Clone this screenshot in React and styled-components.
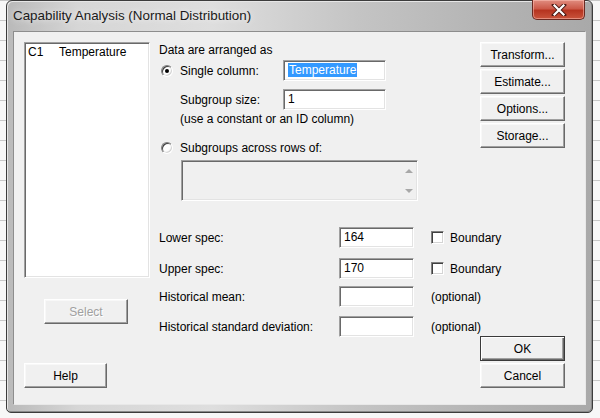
import React from "react";
import styled, { createGlobalStyle, css } from "styled-components";

const GlobalStyle = createGlobalStyle`
  html, body { margin: 0; padding: 0; }
  body {
    width: 600px;
    height: 418px;
    overflow: hidden;
    background-color: #f7f7f7;
    background-image: linear-gradient(#c8c8c8 1px, transparent 1px);
    background-size: 100% 20px;
    font-family: "Liberation Sans", Arial, sans-serif;
    font-size: 12px;
    color: #000;
  }
  * { box-sizing: border-box; }
`;

// classic 3d borders
const sunken = css`
  border: 1px solid;
  border-color: #a0a0a0 #ffffff #ffffff #a0a0a0;
  box-shadow: inset 1px 1px 0 #696969, inset -1px -1px 0 #e3e3e3;
`;

const raised = css`
  border: 1px solid;
  border-color: #ffffff #696969 #696969 #ffffff;
  box-shadow: inset -1px -1px 0 #a0a0a0, inset 1px 1px 0 #f8f8f8;
`;

const Desktop = styled.div`
  padding-left: 6px;
  height: 418px;
`;

const Window = styled.div`
  width: 587px;
  height: 413px;
  display: flex;
  flex-direction: column;
  padding: 0 6px 7px 6px;
  border: 1px solid #3c3c3c;
  border-radius: 6px 6px 5px 5px;
  background: linear-gradient(
    to right,
    #b9b9b9 0%,
    #d6d6d6 12%,
    #dedede 35%,
    #c4c4c4 60%,
    #b2b2b2 85%,
    #a9a9a9 100%
  );
  box-shadow: inset 1px 1px 0 #e6e6e6, inset -1px -1px 0 #8a8a8a;
`;

const TitleBar = styled.div`
  height: 30px;
  display: flex;
  align-items: flex-start;
  justify-content: space-between;
`;

const Title = styled.div`
  margin-top: 7px;
  font-size: 13.4px;
  color: #1a1a1a;
  text-shadow: 0 0 6px rgba(255, 255, 255, 0.9);
`;

const CloseButton = styled.div`
  width: 53px;
  height: 20px;
  margin-top: -1px;
  margin-right: 1px;
  display: flex;
  align-items: center;
  justify-content: center;
  border: 1px solid #6b2a22;
  border-top: none;
  border-radius: 0 0 5px 5px;
  background: linear-gradient(#e08d80 0%, #cc5a49 45%, #b63420 55%, #c9543c 100%);
  box-shadow: inset 0 0 0 1px rgba(255, 200, 190, 0.5);
`;

const Client = styled.div`
  flex: 1;
  display: flex;
  padding: 10px 20px 16px 10px;
  background: #f0f0f0;
  border: 1px solid;
  border-color: #8d8d8d #e8e8e8 #e8e8e8 #8d8d8d;
`;

const LeftCol = styled.div`
  width: 126px;
  flex-shrink: 0;
  display: flex;
  flex-direction: column;
`;

const MiddleCol = styled.div`
  flex: 1;
  min-width: 0;
  margin-left: 9px;
  display: flex;
  flex-direction: column;
`;

const RightCol = styled.div`
  width: 85px;
  flex-shrink: 0;
  display: flex;
  flex-direction: column;
  gap: 2px;
`;

const ListBox = styled.div`
  ${sunken};
  height: 236px;
  background: #fff;
  padding: 2px 3px;
`;

const ListItem = styled.div`
  display: flex;
  line-height: 15px;
  span:first-child { width: 31px; }
`;

const Button = styled.button`
  ${raised};
  width: ${(p) => p.$w || 85}px;
  height: 25px;
  margin: ${(p) => p.$m || "0"};
  padding: 0;
  background: #f0f0f0;
  font-family: inherit;
  font-size: 12px;
  color: #000;
  &:disabled {
    color: #a0a0a0;
    text-shadow: 1px 1px 0 #fff;
  }
`;

const DefaultButton = styled(Button)`
  border: 1px solid #3a3a3a;
  box-shadow: inset 1px 1px 0 #fff, inset -1px -1px 0 #696969, inset -2px -2px 0 #a0a0a0;
`;

const Heading = styled.div`
  line-height: 16px;
`;

const Row = styled.div`
  display: flex;
  align-items: center;
  height: 21px;
  flex-shrink: 0;
  margin-top: ${(p) => p.$mt || 0}px;
  padding-left: ${(p) => p.$indent || 0}px;
`;

const Radio = styled.span`
  width: 12px;
  height: 12px;
  margin-right: 7px;
  border-radius: 50%;
  display: flex;
  align-items: center;
  justify-content: center;
  background: radial-gradient(circle at 40% 35%, #ffffff 40%, #e4e4e4 100%);
  border: 1px solid;
  border-color: #808080 #ffffff #ffffff #808080;
  box-shadow: inset 1px 1px 0 #404040, inset -1px -1px 0 #d4d4d4;
  &::after {
    content: "";
    width: 4px;
    height: 4px;
    border-radius: 50%;
    background: ${(p) => (p.$checked ? "#000" : "transparent")};
  }
`;

const RowLabel = styled.span`
  width: ${(p) => p.$w}px;
  flex-shrink: 0;
`;

const TextInput = styled.div`
  ${sunken};
  width: ${(p) => p.$w}px;
  height: 21px;
  background: #fff;
  padding: 2px 0 0 4px;
  line-height: 15px;
  white-space: nowrap;
  flex-shrink: 0;
`;

const Selected = styled.span`
  background: #3399ff;
  color: #fff;
  padding: 0 1px;
`;

const Note = styled.div`
  line-height: 16px;
  margin-top: 1px;
  padding-left: 21px;
`;

const RowsBox = styled.div`
  ${sunken};
  width: 237px;
  height: 41px;
  margin: 2px 0 0 22px;
  background: #f0f0f0;
  display: flex;
  justify-content: flex-end;
`;

const ScrollTrack = styled.div`
  width: 17px;
  display: flex;
  flex-direction: column;
  justify-content: space-between;
  align-items: center;
  padding: 8px 0 7px;
`;

const Arrow = styled.span`
  width: 0;
  height: 0;
  border-left: 4px solid transparent;
  border-right: 4px solid transparent;
  ${(p) =>
    p.$down
      ? "border-top: 4px solid #a8a8a8;"
      : "border-bottom: 4px solid #a8a8a8;"}
`;

const Extra = styled.div`
  display: flex;
  align-items: center;
  padding-left: 17px;
`;

const Checkbox = styled.span`
  width: 13px;
  height: 13px;
  margin-right: 6px;
  background: #fff;
  border: 1px solid;
  border-color: #808080 #ffffff #ffffff #808080;
  box-shadow: inset 1px 1px 0 #404040, inset -1px -1px 0 #d4d4d4;
`;

const Spacer = styled.div`
  flex: 1;
`;

const specs = [
  { label: "Lower spec:", value: "164", boundary: true, mt: 26 },
  { label: "Upper spec:", value: "170", boundary: true, mt: 10 },
  { label: "Historical mean:", value: "", boundary: false, mt: 7 },
  { label: "Historical standard deviation:", value: "", boundary: false, mt: 9 },
];

export default function App() {
  return (
    <>
      <GlobalStyle />
      <Desktop>
        <Window>
          <TitleBar>
            <Title>Capability Analysis (Normal Distribution)</Title>
            <CloseButton>
              <svg width="16" height="12" viewBox="0 0 16 12">
                <path
                  d="M3 1 L13 11 M13 1 L3 11"
                  stroke="#4a1a14"
                  strokeWidth="4"
                  strokeLinecap="square"
                />
                <path
                  d="M3.5 1.5 L12.5 10.5 M12.5 1.5 L3.5 10.5"
                  stroke="#ffffff"
                  strokeWidth="2.2"
                  strokeLinecap="square"
                />
              </svg>
            </CloseButton>
          </TitleBar>
          <Client>
            <LeftCol>
              <ListBox>
                <ListItem>
                  <span>C1</span>
                  <span>Temperature</span>
                </ListItem>
              </ListBox>
              <Button $w={84} $m="21px 0 0 20px" disabled>
                Select
              </Button>
              <Spacer />
              <Button $w={83}>Help</Button>
            </LeftCol>

            <MiddleCol>
              <Heading>Data are arranged as</Heading>
              <Row $mt={2} $indent={2}>
                <Radio $checked />
                <RowLabel $w={103}>Single column:</RowLabel>
                <TextInput $w={103}>
                  <Selected>Temperature</Selected>
                </TextInput>
              </Row>
              <Row $mt={8} $indent={21}>
                <RowLabel $w={103}>Subgroup size:</RowLabel>
                <TextInput $w={103}>1</TextInput>
              </Row>
              <Note>(use a constant or an ID column)</Note>
              <Row $mt={10} $indent={2}>
                <Radio />
                <RowLabel $w={200}>Subgroups across rows of:</RowLabel>
              </Row>
              <RowsBox>
                <ScrollTrack>
                  <Arrow />
                  <Arrow $down />
                </ScrollTrack>
              </RowsBox>

              {specs.map((s) => (
                <Row key={s.label} $mt={s.mt}>
                  <RowLabel $w={180}>{s.label}</RowLabel>
                  <TextInput $w={75}>{s.value}</TextInput>
                  <Extra>
                    {s.boundary ? (
                      <>
                        <Checkbox />
                        <span>Boundary</span>
                      </>
                    ) : (
                      <span>(optional)</span>
                    )}
                  </Extra>
                </Row>
              ))}
            </MiddleCol>

            <RightCol>
              <Button>Transform...</Button>
              <Button>Estimate...</Button>
              <Button>Options...</Button>
              <Button>Storage...</Button>
              <Spacer />
              <DefaultButton>OK</DefaultButton>
              <Button>Cancel</Button>
            </RightCol>
          </Client>
        </Window>
      </Desktop>
    </>
  );
}
